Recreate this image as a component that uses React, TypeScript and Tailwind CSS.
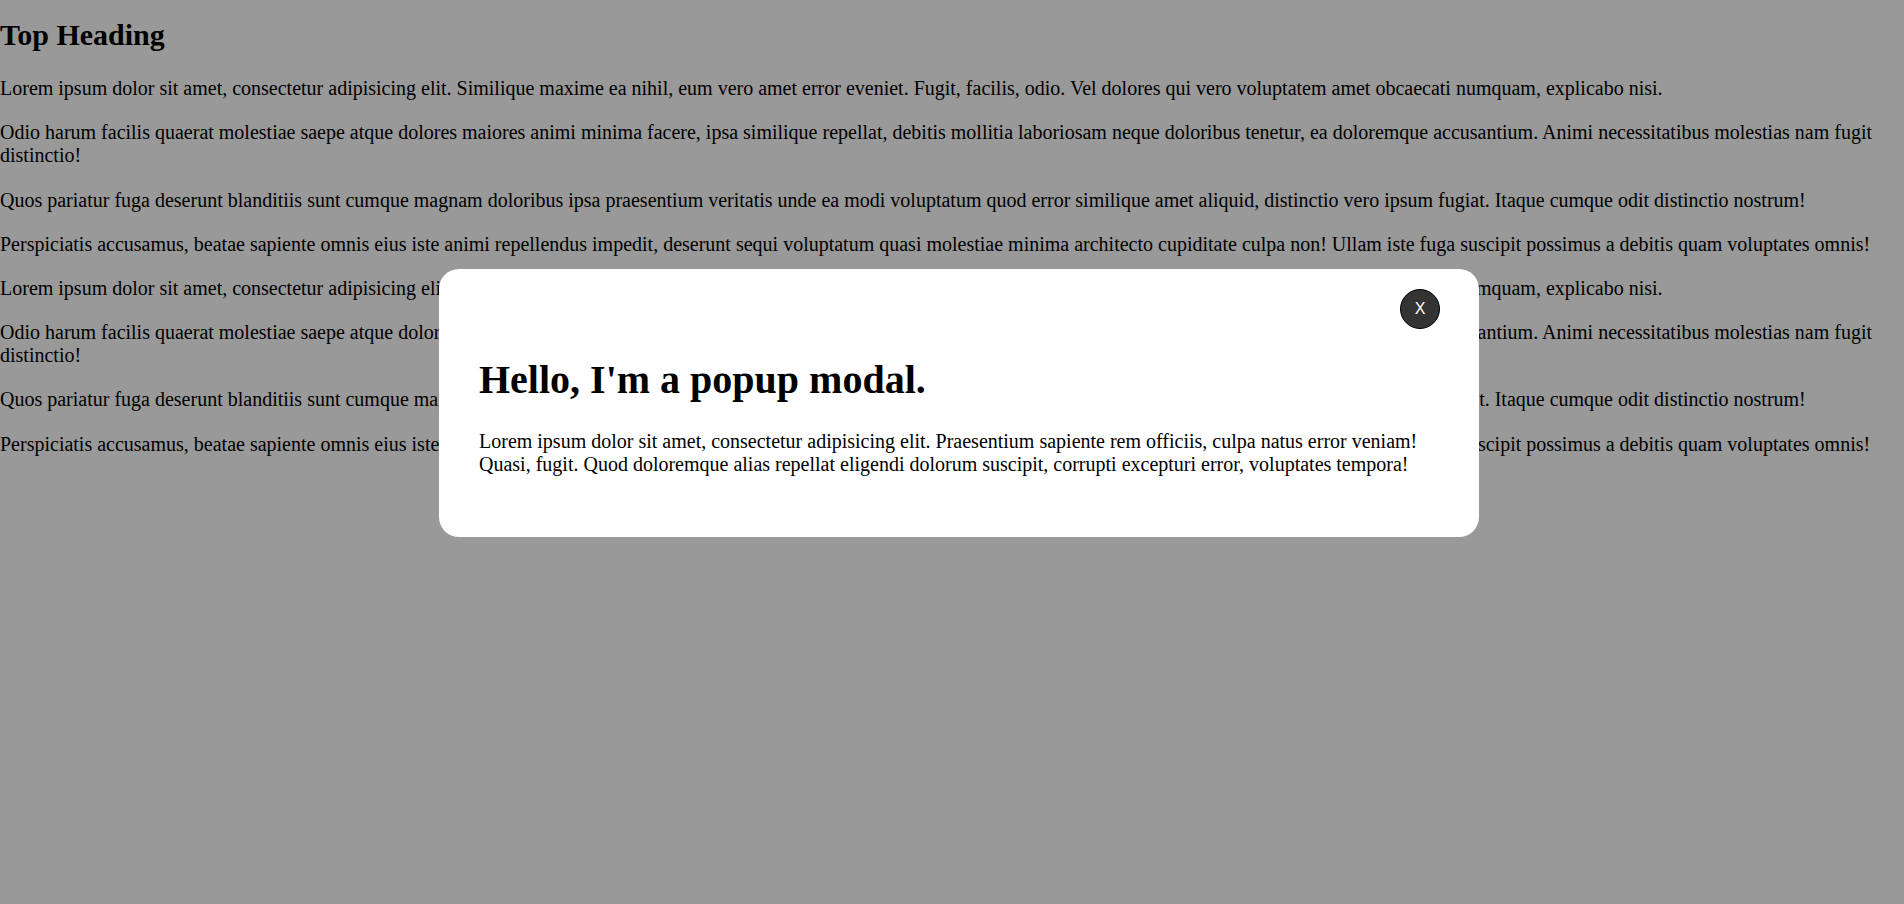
import React, { useState } from 'react';

const paragraphs = [
  'Lorem ipsum dolor sit amet, consectetur adipisicing elit. Similique maxime ea nihil, eum vero amet error eveniet. Fugit, facilis, odio. Vel dolores qui vero voluptatem amet obcaecati numquam, explicabo nisi.',
  'Odio harum facilis quaerat molestiae saepe atque dolores maiores animi minima facere, ipsa similique repellat, debitis mollitia laboriosam neque doloribus tenetur, ea doloremque accusantium. Animi necessitatibus molestias nam fugit distinctio!',
  'Quos pariatur fuga deserunt blanditiis sunt cumque magnam doloribus ipsa praesentium veritatis unde ea modi voluptatum quod error similique amet aliquid, distinctio vero ipsum fugiat. Itaque cumque odit distinctio nostrum!',
  'Perspiciatis accusamus, beatae sapiente omnis eius iste animi repellendus impedit, deserunt sequi voluptatum quasi molestiae minima architecto cupiditate culpa non! Ullam iste fuga suscipit possimus a debitis quam voluptates omnis!',
];

export default function App() {
  const [open, setOpen] = useState(true);

  return (
    <div className="min-h-screen bg-white text-black font-['Liberation_Serif','Times_New_Roman',serif]">
      <h2 className="mt-[17.6px] mb-[25.6px] text-[30px] font-bold leading-[normal]">Top Heading</h2>

      {[...paragraphs, ...paragraphs].map((p, i) => (
        <p key={i} className="mb-[21.2px] text-[20px] leading-[normal]">
          {p}
        </p>
      ))}

      {open && (
        <div className="fixed inset-0 bg-black/40">
          <div className="absolute left-[439px] top-[269px] w-[1040px] rounded-[20px] bg-white px-[40px] pt-[87px] pb-[61px]">
            <button
              onClick={() => setOpen(false)}
              className="absolute top-[20px] right-[39px] flex h-[40px] w-[40px] items-center justify-center rounded-full border border-black bg-[#333] text-[16px] text-white font-['Liberation_Sans',Arial,sans-serif] cursor-pointer"
            >
              X
            </button>
            <h1 className="mb-[27.3px] text-[40px] font-bold leading-[normal]">Hello, I'm a popup modal.</h1>
            <p className="text-[20px] leading-[normal]">
              Lorem ipsum dolor sit amet, consectetur adipisicing elit. Praesentium sapiente rem officiis, culpa natus
              error veniam! Quasi, fugit. Quod doloremque alias repellat eligendi dolorum suscipit, corrupti excepturi
              error, voluptates tempora!
            </p>
          </div>
        </div>
      )}
    </div>
  );
}
